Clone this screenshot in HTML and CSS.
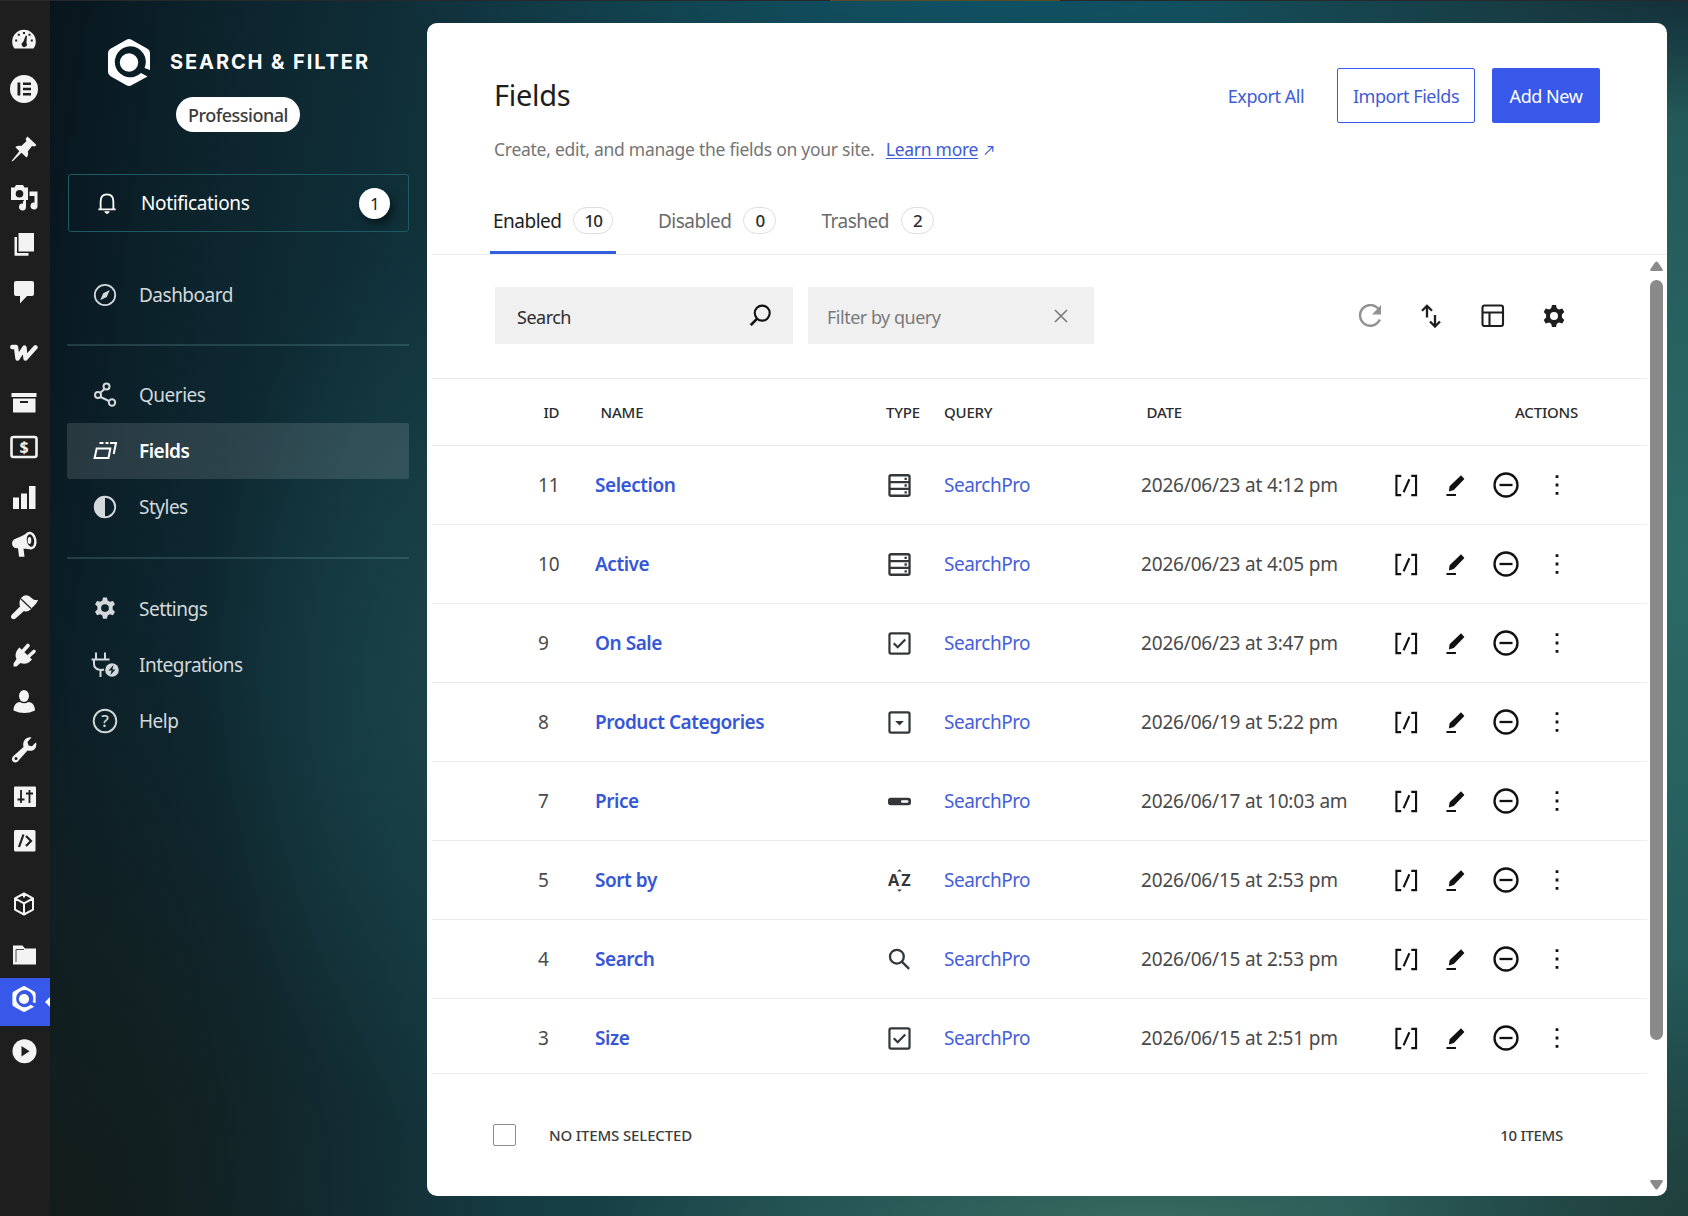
FILE: index.html
```html
<!DOCTYPE html>
<html lang="en">

<head>
    <meta charset="UTF-8">
    <meta name="viewport" content="width=device-width, initial-scale=1.0">
    <title>Fields - Search &amp; Filter</title>
    <link rel="stylesheet" href="styles.css">
</head>

<body>
    <svg class="sprite" width="0" height="0">
        <symbol id="logo" viewBox="0 0 42 47">
            <path fill="currentColor" fill-rule="evenodd" d="M18.5 .8q2.5-1.4 5 0L39.500 9.800Q42 11.200 42 14V31L36.500 29A15.500 15.500 0 1 0 33 34L39.500 37.500L23.500 46.300q-2.500 1.400-5 0L2.500 37.200Q0 35.800 0 33V14q0-2.800 2.500-4.200z" />
            <circle cx="21" cy="23.500" r="9.200" fill="currentColor" />
        </symbol>
        <symbol id="gear" viewBox="0 0 24 24">
            <path fill="currentColor" fill-rule="evenodd" d="M10 1h4l.8 3.300 2.200 1.300 3.300-1 2 3.500-2.400 2.400v3l2.400 2.400-2 3.500-3.300-1-2.200 1.300L14 23h-4l-.8-3.300L7 18.400l-3.300 1-2-3.500 2.400-2.400v-3L1.700 8.100l2-3.500 3.300 1 2.200-1.300zM12 8a4 4 0 1 0 0 8 4 4 0 0 0 0-8z" />
        </symbol>
        <symbol id="type-choice" viewBox="0 0 22 22">
            <g fill="none" stroke="currentColor" stroke-width="2.200">
                <rect x="1.400" y="1.200" width="19.200" height="19.600" rx="1.500" />
                <path d="M1.400 7.700h19.200M1.400 14.300h19.200" />
            </g>
            <path fill="currentColor" d="M15.800 3.500h2.200v2.200h-2.200zM15.800 9.900h2.200v2.200h-2.200zM15.800 16.500h2.200v2.200h-2.200z" />
        </symbol>
        <symbol id="type-check" viewBox="0 0 22 22">
            <g fill="none" stroke="currentColor" stroke-width="2.100">
                <rect x="1.400" y="1.400" width="19.200" height="19.200" rx="1.500" />
                <path d="M5.500 10.800l3.800 3.800 7.200-7.400" />
            </g>
        </symbol>
        <symbol id="type-select" viewBox="0 0 22 22">
            <rect x="1.400" y="1.400" width="19.200" height="19.200" rx="1.500" fill="none" stroke="currentColor" stroke-width="2.100" />
            <path fill="currentColor" d="M6.800 9.500h8.400L11 13.800z" />
        </symbol>
        <symbol id="type-range" viewBox="0 0 22 22">
            <rect x="0" y="7.500" width="22" height="7" rx="2.500" fill="currentColor" />
            <rect x="12.500" y="9.700" width="7" height="2.600" rx="1" fill="#fff" />
        </symbol>
        <symbol id="type-sort" viewBox="0 0 24 24">
            <path fill="currentColor" d="M9.500 2.600L12 .3l2.500 2.300zM9.500 21.400l2.500 2.300 2.500-2.300z" />
            <text x="0" y="18" class="glyph-az">A</text>
            <text x="13.800" y="18" class="glyph-az">Z</text>
        </symbol>
        <symbol id="type-search" viewBox="0 0 22 22">
            <g fill="none" stroke="currentColor" stroke-width="2.200">
                <circle cx="8.500" cy="8.300" r="6.600" />
                <path d="M13.200 13l7 7" />
            </g>
        </symbol>
        <symbol id="shortcode" viewBox="0 0 24 24">
            <path fill="none" stroke="currentColor" stroke-width="2.200" d="M7 2H2v20h5M17.500 2h5v20h-5M15.500 5.500l-6 13.500" />
        </symbol>
        <symbol id="pencil" viewBox="0 0 20 24">
            <path fill="currentColor" d="M15.800 1.200l3.600 4-11.200 11.600-5.200 1.400.8-5.500zM.500 21h10v2h-10z" />
        </symbol>
        <symbol id="minus" viewBox="0 0 26 26">
            <g fill="none" stroke="currentColor" stroke-width="2.300">
                <circle cx="13" cy="13" r="11.500" />
                <path d="M6.500 13h13" />
            </g>
        </symbol>
        <symbol id="dots" viewBox="0 0 4 22">
            <path fill="currentColor" d="M.600 1.200h2.800v2.800H.600zM.600 9.600h2.800v2.800H.600zM.600 18h2.800v2.800H.600z" />
        </symbol>
    </svg>

    <div class="top-edge"></div>

    <nav class="rail">
        <a class="rail-item"><svg viewBox="0 0 28 28"><path fill="currentColor" d="M4.500 23.500C2.500 21 2.200 18.800 2.200 16.500a11.800 11.800 0 0 1 23.600 0c0 2.300-.5 4.700-2.300 7z" /><path fill="#1e1e1e" d="M15.800 10.500l1.200.4-.6 7a2.600 2.600 0 1 1-3.200-.9zM13 7h2v2h-2zM7.800 8.800h2v2h-2zM5.200 14.500h2v2h-2zM18.500 8.800h2v2h-2zM20.800 14.500h2v2h-2z" /></svg></a>
        <a class="rail-item"><svg viewBox="0 0 28 28"><circle cx="14" cy="14" r="14" fill="currentColor" /><path fill="#1e1e1e" d="M7.500 7.500h2.800v13H7.500zM13 7.500h8v2.600h-8zM13 12.700h8v2.600h-8zM13 17.900h8v2.600h-8z" /></svg></a>
        <a class="rail-item"><svg viewBox="0 0 28 28"><path fill="currentColor" d="M17.500 1.500l9 8.500-2 1.600-2.500-.6-4.200 5.500c.8 2.500.2 4.500-1.300 6l-5-4.800L3 26l-1.500.6L2.300 25l7-8.800-4-4.200c2-1.500 4-1.600 6-1l5-4.800-.6-2.500z" /></svg></a>
        <a class="rail-item"><svg viewBox="0 0 28 28"><path fill="currentColor" fill-rule="evenodd" d="M1 3.500h3.500L6 1h7l1.500 2.500H18V16H1zM9.500 6a3.800 3.800 0 1 0 0 7.600 3.800 3.800 0 0 0 0-7.600z" /><path fill="currentColor" d="M19.500 7.500h8V22a3.500 3.500 0 1 1-3-3.500V12h-5zM16 14v9a3.500 3.500 0 1 1-3-3.500V17.500z" /></svg></a>
        <a class="rail-item"><svg viewBox="0 0 28 28"><path fill="currentColor" d="M8.500 3h15.500v18.500H8.500zM4.500 7H7v16h11.500v2.800H4.500z" /></svg></a>
        <a class="rail-item"><svg viewBox="0 0 28 28"><path fill="currentColor" d="M6 3h16q2 0 2 2v11q0 2-2 2h-5l-7 7.500V18H6q-2 0-2-2V5q0-2 2-2z" /></svg></a>
        <a class="rail-item"><svg viewBox="0 0 28 28"><path fill="none" stroke="currentColor" stroke-width="4.400" stroke-linecap="round" stroke-linejoin="round" d="M2.300 8H6l1.500 11.500L14.500 8.500l1 11L25.500 8.300" /></svg></a>
        <a class="rail-item"><svg viewBox="0 0 28 28"><path fill="currentColor" fill-rule="evenodd" d="M1.500 4h25v4h-25zM3 9.500h22.500V23.500H3zM10 12v2h8v-2z" /></svg></a>
        <a class="rail-item"><svg viewBox="0 0 28 28"><rect x="1.500" y="4" width="25" height="20" rx="2" fill="none" stroke="currentColor" stroke-width="2.600" /><text x="14" y="20" class="glyph-dollar">$</text></svg></a>
        <a class="rail-item"><svg viewBox="0 0 28 28"><path fill="currentColor" d="M3 13.500h6V25H3zM11 9.500h6V25h-6zM19 2h6.500v23H19z" /></svg></a>
        <a class="rail-item"><svg viewBox="0 0 28 28"><path fill="currentColor" d="M17 3C12 6.500 7 8 4 9.500c-3 2-2.500 7 1 8.500l3 .2 1 8.600h5.500l-1-8c3 0 5 .3 8 .7z" /><ellipse cx="20.500" cy="10.500" rx="4.800" ry="7.600" transform="rotate(-10 20.500 10.500)" fill="#1e1e1e" stroke="currentColor" stroke-width="2.400" /><ellipse cx="19.500" cy="10.500" rx="1.800" ry="3.400" fill="currentColor" /></svg></a>
        <a class="rail-item"><svg viewBox="0 0 28 28"><path fill="currentColor" d="M11.500 4.500q3.500-3.500 7.500-1.500l4.500 3.500q2.500 1 4.500.3c-1 4-4.500 6.200-7.500 9.700q-3 3-6.500 1.500L5.500 25.500q-2 1.500-3.700 0t0-3.700l8.200-8.300q-1.500-5 1.500-9z" /><path stroke="#1e1e1e" stroke-width="1.200" d="M11 6l10 9.500" /></svg></a>
        <a class="rail-item"><svg viewBox="0 0 28 28"><path fill="currentColor" d="M9.500 6.500L22 18.500c-3 4-7.500 5.200-11.500 3.500L6.500 25.500h-3v-3l3-4.500C4.500 14.500 6 9.500 9.500 6.500z" /><path stroke="currentColor" stroke-width="3.600" stroke-linecap="round" d="M13.500 9.500l4.500-5M19 15l5-4.500" /></svg></a>
        <a class="rail-item"><svg viewBox="0 0 28 28"><ellipse cx="14" cy="8" rx="5" ry="6" fill="currentColor" /><path fill="currentColor" d="M3.500 22.500c0-5 2.500-8 6.500-8.500q4 2.500 8.500 0c4 .5 6.500 3.500 6.500 8.500q-10.500 5-21.500 0z" /></svg></a>
        <a class="rail-item"><svg viewBox="0 0 28 28"><path fill="currentColor" fill-rule="evenodd" d="M21.500 1.500l-4 4.500 1 3.500 3.500.8 4-4c1 4-.5 7-3.500 8.200-2 .7-4 .2-5 0L9 24c-2 3-4.500 3-6 1.500s-1.500-4 1-6l9.500-8.500c-1.500-6 3-10.500 8-9.500zM6 21a1.500 1.500 0 1 0 0 3 1.500 1.500 0 0 0 0-3z" /></svg></a>
        <a class="rail-item"><svg viewBox="0 0 28 28"><rect x="4" y="3.500" width="22" height="20.500" rx="1" fill="currentColor" /><path stroke="#1e1e1e" stroke-width="1.800" d="M11 7v13M19.500 7v13M7.500 16.500h7M16 10.500h7" /></svg></a>
        <a class="rail-item"><svg viewBox="0 0 28 28"><rect x="4" y="3" width="21.500" height="21.500" rx="1.500" fill="currentColor" /><path fill="none" stroke="#1e1e1e" stroke-width="2.200" d="M13.500 7.500L9 20M16 9l5 5-5 5" /></svg></a>
        <a class="rail-item"><svg viewBox="0 0 28 28"><path fill="none" stroke="currentColor" stroke-width="2" stroke-linejoin="round" d="M14 3.500l9 4.800v11.400l-9 4.800-9-4.800V8.300zM5 8.300l9 5 9-5M14 13.300v11.200M14 3.500v4" /></svg></a>
        <a class="rail-item"><svg viewBox="0 0 28 28"><path fill="currentColor" d="M3 4.500h9.500l2.500 3h11v16H3z" /><path fill="none" stroke="#1e1e1e" stroke-width=".8" d="M6 21V8.500h8" /></svg></a>
        <a class="rail-item active"><svg class="rail-logo"><use href="#logo" /></svg></a>
        <a class="rail-item"><svg viewBox="0 0 28 28"><circle cx="14.500" cy="14.300" r="12" fill="currentColor" /><path fill="#1e1e1e" d="M11.500 9l8 5.300-8 5.300z" /></svg></a>
    </nav>

    <aside class="sidebar">
        <div class="brand">
            <svg class="brand-logo"><use href="#logo" /></svg>
            <span class="brand-name">SEARCH &amp; FILTER</span>
        </div>
        <div class="plan">Professional</div>

        <a class="notifications">
            <svg class="bell" viewBox="0 0 22 24"><path fill="none" stroke="currentColor" stroke-width="2" d="M1.500 18.500h19M4 18.500V10q0-8 7-8t7 8v8.500" /><path fill="currentColor" d="M8 20.500h6q-.8 3-3 3t-3-3z" /></svg>
            <span class="notifications-label">Notifications</span>
            <span class="notifications-count">1</span>
        </a>

        <a class="menu-item">
            <svg viewBox="0 0 28 28"><circle cx="14" cy="14" r="10.200" fill="none" stroke="currentColor" stroke-width="1.800" /><path fill="currentColor" d="M18.800 9l-3 7-6.600 3.200 3-7z" /></svg>
            Dashboard
        </a>
        <hr class="menu-divider">
        <a class="menu-item">
            <svg viewBox="0 0 28 28"><g fill="none" stroke="currentColor" stroke-width="2"><circle cx="15.500" cy="5.500" r="3" /><circle cx="7" cy="14" r="3" /><circle cx="21" cy="21.500" r="3.200" /><path d="M13.500 8l-4.500 4M9.500 16l8.500 4" /></g></svg>
            Queries
        </a>
        <a class="menu-item active">
            <svg viewBox="0 0 28 28"><g fill="none" stroke="currentColor" stroke-width="2"><path d="M5.700 11.500h13.600l-1.800 9.500H3.600z" /><path d="M8.500 6h4M14.500 6h3M19 6h6l-2.300 11" /></g></svg>
            Fields
        </a>
        <a class="menu-item">
            <svg viewBox="0 0 28 28"><circle cx="14" cy="14" r="10.200" fill="none" stroke="currentColor" stroke-width="1.900" /><path fill="currentColor" d="M14 3a11 11 0 0 0 0 22z" /></svg>
            Styles
        </a>
        <hr class="menu-divider last">
        <a class="menu-item">
            <svg viewBox="-1.500 -1.500 29 29"><use href="#gear" width="24" height="24" x="1" y="0" /></svg>
            Settings
        </a>
        <a class="menu-item">
            <svg viewBox="0 0 28 28"><path fill="none" stroke="currentColor" stroke-width="2" d="M5 1.500V8M14 1.500V8M.500 8.500h18M3 9v4q0 5 6.500 6 2 0 3.500-.5M9.500 19v7" /><circle cx="21" cy="19" r="6.800" fill="currentColor" /><path fill="#12292f" d="M22.500 14l-5 5.500h3l-1 4.500 5-5.500h-3z" /></svg>
            Integrations
        </a>
        <a class="menu-item">
            <svg viewBox="0 0 28 28"><circle cx="14" cy="14" r="11.300" fill="none" stroke="currentColor" stroke-width="1.900" /><text x="14" y="20" class="glyph-help">?</text></svg>
            Help
        </a>
    </aside>

    <main class="panel">
        <header class="panel-header">
            <div class="title-row">
                <h1>Fields</h1>
                <div class="header-actions">
                    <button class="btn btn-link">Export All</button>
                    <button class="btn btn-outline">Import Fields</button>
                    <button class="btn btn-primary">Add New</button>
                </div>
            </div>
            <p class="subtitle">Create, edit, and manage the fields on your site.
                <a class="learn-more">Learn more</a>
                <svg class="external" viewBox="0 0 11 11"><path fill="none" stroke="currentColor" stroke-width="1.300" d="M1 10l8.500-8.500M4 1.300h5.700V7" /></svg>
            </p>
            <div class="tabs">
                <a class="tab active">Enabled <span class="count">10</span></a>
                <a class="tab">Disabled <span class="count">0</span></a>
                <a class="tab">Trashed <span class="count">2</span></a>
            </div>
        </header>

        <div class="panel-body">
            <section class="listing">
                <div class="toolbar">
                    <div class="search-box">
                        <span>Search</span>
                        <svg viewBox="0 0 24 24"><g fill="none" stroke="currentColor" stroke-width="2.200"><circle cx="13.800" cy="9.500" r="7.800" /><path stroke-width="2.800" d="M8.300 15.500L1.800 22" /></g></svg>
                    </div>
                    <div class="filter-box">
                        <span>Filter by query</span>
                        <svg viewBox="0 0 14 14"><path stroke="currentColor" stroke-width="1.600" d="M1 1l12 12M13 1L1 13" /></svg>
                    </div>
                    <div class="tools">
                        <svg class="muted" viewBox="0 0 24 24"><path fill="none" stroke="currentColor" stroke-width="2.400" d="M20.800 5.500A10.300 10.300 0 1 0 21.800 15.500" /><path fill="currentColor" d="M23 1v9.500h-9z" /></svg>
                        <svg viewBox="0 0 24 24"><g fill="none" stroke="currentColor" stroke-width="2.300"><path d="M8 13.500V1.800M3 6.800l5-5L13 6.800M16 11v11.500M11 17.500l5 5 5-5" /></g></svg>
                        <svg viewBox="0 0 24 24"><g fill="none" stroke="currentColor" stroke-width="2.100"><rect x="1.500" y="1.500" width="20.500" height="20.500" rx="2" /><path d="M1.500 8.500H22M8.500 8.500V22" /></g></svg>
                        <svg viewBox="0 0 24 24"><use href="#gear" /></svg>
                    </div>
                </div>

                <div class="row table-head">
                    <span>ID</span>
                    <span>NAME</span>
                    <span>TYPE</span>
                    <span>QUERY</span>
                    <span>DATE</span>
                    <span>ACTIONS</span>
                </div>
                <div class="table-body" id="table-body"></div>

                <footer class="listing-footer">
                    <span class="checkbox"></span>
                    <span>NO ITEMS SELECTED</span>
                    <span class="total">10 ITEMS</span>
                </footer>
            </section>

            <div class="scrollbar">
                <svg viewBox="0 0 13 10"><path fill="currentColor" d="M5 1.500q1.500-2 3 0l4.500 6.500q1 2-1 2h-10q-2 0-1-2z" /></svg>
                <div class="thumb"></div>
                <svg class="down" viewBox="0 0 13 10"><path fill="currentColor" d="M5 8.500q1.500 2 3 0L12.500 2q1-2-1-2h-10q-2 0-1 2z" /></svg>
            </div>
        </div>
    </main>

    <script>
        const fields = [
            { id: 11, name: 'Selection', type: 'choice', query: 'SearchPro', date: '2026/06/23 at 4:12 pm' },
            { id: 10, name: 'Active', type: 'choice', query: 'SearchPro', date: '2026/06/23 at 4:05 pm' },
            { id: 9, name: 'On Sale', type: 'check', query: 'SearchPro', date: '2026/06/23 at 3:47 pm' },
            { id: 8, name: 'Product Categories', type: 'select', query: 'SearchPro', date: '2026/06/19 at 5:22 pm' },
            { id: 7, name: 'Price', type: 'range', query: 'SearchPro', date: '2026/06/17 at 10:03 am' },
            { id: 5, name: 'Sort by', type: 'sort', query: 'SearchPro', date: '2026/06/15 at 2:53 pm' },
            { id: 4, name: 'Search', type: 'search', query: 'SearchPro', date: '2026/06/15 at 2:53 pm' },
            { id: 3, name: 'Size', type: 'check', query: 'SearchPro', date: '2026/06/15 at 2:51 pm' }
        ];

        function renderFields() {
            document.getElementById('table-body').innerHTML = fields.map(field => `
                <div class="row">
                    <span class="cell-id">${field.id}</span>
                    <a class="cell-name">${field.name}</a>
                    <svg class="cell-type"><use href="#type-${field.type}" /></svg>
                    <a class="cell-query">${field.query}</a>
                    <span class="cell-date">${field.date}</span>
                    <span class="cell-actions">
                        <svg class="act-shortcode"><use href="#shortcode" /></svg>
                        <svg class="act-edit"><use href="#pencil" /></svg>
                        <svg class="act-disable"><use href="#minus" /></svg>
                        <svg class="act-more"><use href="#dots" /></svg>
                    </span>
                </div>
            `).join('');
        }

        renderFields();
    </script>
</body>

</html>
```

FILE: styles.css
```css
* {
    box-sizing: border-box;
}

body {
    margin: 0;
    height: 1216px;
    display: flex;
    overflow: hidden;
    font-family: "Segoe UI", "Noto Sans", sans-serif;
    font-size: 19px;
    letter-spacing: -0.5px;
    color: #1e1e1e;
    background:
        radial-gradient(ellipse 330px 260px at 1688px 1216px, #203f3c 0%, rgba(32, 63, 60, 0) 100%),
        radial-gradient(ellipse 500px 120px at 1688px 0, #14303a 0%, rgba(20, 48, 58, 0) 100%),
        radial-gradient(ellipse 600px 80px at 1000px 0, #0e5064 0%, rgba(14, 80, 100, 0) 100%),
        radial-gradient(ellipse 560px 700px at 1688px 560px, #2b6a66 0%, rgba(43, 106, 102, 0) 100%),
        radial-gradient(ellipse 560px 100px at 1150px 1216px, #37695f 0%, rgba(55, 105, 95, 0) 100%),
        radial-gradient(ellipse 260px 460px at 460px 680px, #1b444a 0%, rgba(27, 68, 74, 0) 100%),
        radial-gradient(ellipse 450px 600px at 50px 1216px, #131c1a 0%, rgba(19, 28, 26, 0) 100%),
        linear-gradient(98deg, #08151c 50px, #0c222b 200px, #10303a 430px, #1b4a4e 1000px, #1f5052 100%);
}

.sprite {
    display: none;
}

/* window frame showing above the page */
.top-edge {
    position: absolute;
    top: 0;
    left: 0;
    width: 100%;
    height: 1px;
    background: linear-gradient(90deg, #26282a 830px, #5c4a24 830px, #5c4a24 1060px, #26282a 1060px);
}

/* admin rail */
.rail {
    width: 50px;
    flex: none;
    display: grid;
    grid-template-rows: 53px 50px 60px 49px 46px 48px 61px 50px 44px 51px 46px 63px 48px 47px 48px 47px 44px 63px 51px 57px 39px;
    align-content: start;
    align-items: end;
    background: #1e1e1e;
    color: #f3f3f3;
}

.rail-item {
    display: flex;
    padding-left: 10px;
}

.rail-item svg {
    width: 28px;
    height: 28px;
}

.rail-item.active {
    position: relative;
    height: 48px;
    padding-left: 12px;
    padding-top: 8px;
    background: #3858e9;
    color: #fff;
}

.rail-item.active::after {
    content: "";
    position: absolute;
    right: 0;
    top: 19px;
    border: 5px solid transparent;
    border-right-color: #fff;
    border-left: 0;
}

.rail-item .rail-logo {
    width: 24px;
    height: 26px;
}

.glyph-dollar {
    font: bold 16px "Noto Sans", sans-serif;
    letter-spacing: 0;
    text-anchor: middle;
    fill: currentColor;
}

.glyph-help {
    font: 500 17px "Noto Sans", sans-serif;
    letter-spacing: 0;
    text-anchor: middle;
    fill: currentColor;
}

.glyph-az {
    font: bold 17px "Noto Sans", sans-serif;
    letter-spacing: 0;
    fill: currentColor;
}

/* plugin sidebar */
.sidebar {
    width: 376px;
    flex: none;
    padding: 38px 17px 0;
}

.brand {
    height: 48px;
    padding-left: 41px;
    display: flex;
    align-items: center;
    gap: 20px;
    color: #fff;
}

.brand-logo {
    width: 42px;
    height: 47px;
}

.brand-name {
    font-family: Inter, sans-serif;
    font-weight: 700;
    font-size: 20px;
    letter-spacing: 1.9px;
}

.plan {
    width: 124px;
    height: 35px;
    margin: 11px auto 0;
    border-radius: 18px;
    background: #fff;
    color: #3c3c3c;
    font-size: 18px;
    font-weight: 500;
    line-height: 36px;
    text-align: center;
}

.notifications {
    height: 58px;
    margin: 42px 0 35px 1px;
    padding: 0 18px 0 28px;
    display: flex;
    align-items: center;
    border: 1px solid #1f5a62;
    border-radius: 3px;
    color: #fff;
}

.bell {
    width: 20px;
    height: 23px;
    margin-right: 24px;
}

.notifications-label {
    flex: 1;
    letter-spacing: -0.35px;
}

.notifications-count {
    width: 31px;
    height: 31px;
    border-radius: 50%;
    background: #fff;
    color: #1e1e1e;
    font-size: 17px;
    line-height: 31px;
    text-align: center;
    box-shadow: 3px 5px 8px rgba(0, 0, 0, 0.5);
}

.menu-item {
    height: 56px;
    padding-left: 24px;
    display: flex;
    align-items: center;
    gap: 20px;
    color: #d3d9db;
}

.menu-item svg {
    width: 28px;
    height: 28px;
}

.menu-item.active {
    background: rgba(255, 255, 255, 0.125);
    border-radius: 2px;
    color: #fff;
    font-weight: 600;
}

.menu-divider {
    height: 2px;
    margin: 21px 0 21px;
    border: 0;
    background: rgba(110, 160, 165, 0.25);
}

.menu-divider.last {
    margin: 22px 0;
}

/* main panel */
.panel {
    width: 1240px;
    height: 1173px;
    margin: 23px 0 0 1px;
    display: flex;
    flex-direction: column;
    border-radius: 10px;
    background: #fff;
    overflow: hidden;
}

.panel-header {
    height: 232px;
    margin-left: 5px;
    padding: 45px 67px 0 62px;
    border-bottom: 1px solid #ededed;
}

.title-row {
    display: flex;
    justify-content: space-between;
    align-items: center;
    height: 55px;
}

h1 {
    margin: 0 0 2px;
    font-size: 29px;
    font-weight: 400;
    letter-spacing: -0.3px;
}

.header-actions {
    display: flex;
    gap: 17px;
}

.btn {
    height: 55px;
    padding: 0;
    border: 1px solid transparent;
    border-radius: 2px;
    background: none;
    color: #3f5bd8;
    font: inherit;
    font-size: 18px;
    letter-spacing: -0.45px;
}

.btn-link {
    width: 108px;
}

.btn-outline {
    width: 138px;
    border-color: #3858e9;
}

.btn-primary {
    width: 108px;
    background: #3858e9;
    color: #fff;
}

.subtitle {
    margin: 13px 0 0;
    font-size: 17.5px;
    line-height: 26px;
    letter-spacing: -0.27px;
    color: #757575;
}

.learn-more {
    margin-left: 7px;
    color: #3f5bd8;
    text-decoration: underline;
    text-underline-offset: 2px;
}

.external {
    width: 10px;
    height: 11px;
    margin-left: 2px;
    color: #3f5bd8;
}

.tabs {
    display: flex;
    gap: 39px;
    margin: 28px 0 0 -4px;
}

.tab {
    height: 64px;
    padding: 0 3px 3px;
    display: flex;
    align-items: center;
    gap: 12px;
    color: #6b6b6b;
}

.tab.active {
    padding-bottom: 0;
    border-bottom: 3px solid #3060dc;
    color: #1e1e1e;
}

.count {
    min-width: 33px;
    height: 27px;
    padding: 0 10px;
    border: 1px solid #dcdcdc;
    border-radius: 14px;
    color: #2c2c2c;
    font-size: 17px;
    font-weight: 500;
    letter-spacing: -1px;
    line-height: 25px;
    text-align: center;
}

.panel-body {
    flex: 1;
    display: flex;
}

.listing {
    width: 1215px;
    margin-left: 5px;
}

.toolbar {
    height: 123px;
    padding: 32px 81px 0 63px;
    display: flex;
    gap: 15px;
}

.search-box,
.filter-box {
    height: 57px;
    display: flex;
    align-items: center;
    justify-content: space-between;
    background: #f0f0f0;
    font-size: 18px;
    color: #2c2c2c;
}

.search-box span,
.filter-box span {
    padding-top: 2px;
}

.search-box {
    width: 298px;
    padding: 0 21px 0 22px;
}

.search-box svg {
    width: 23px;
    height: 23px;
    color: #111;
}

.filter-box {
    width: 286px;
    padding: 0 26px 0 19px;
    color: #7a7a7a;
}

.filter-box svg {
    width: 14px;
    height: 14px;
}

.tools {
    height: 57px;
    margin-left: auto;
    display: flex;
    align-items: center;
    gap: 37.500px;
}

.tools svg {
    width: 24px;
    height: 24px;
}

.tools .muted {
    color: #919191;
}

.row {
    height: 79.050px;
    padding-left: 106px;
    display: grid;
    grid-template-columns: 57px 291px 58px 197px 253px auto;
    align-items: center;
    border-top: 1px solid #ececec;
}

.table-head {
    height: 67px;
    font-size: 15px;
    font-weight: 500;
    letter-spacing: -0.2px;
    color: #2c2c2c;
}

.table-head span:nth-child(1),
.table-head span:nth-child(2),
.table-head span:nth-child(5) {
    padding-left: 5.500px;
}

.table-head span:last-child {
    padding-left: 121px;
}

.table-body {
    height: 628px;
    overflow: hidden;
}

.cell-id,
.cell-date {
    color: #4a4a4a;
    letter-spacing: -0.18px;
}

.cell-name {
    color: #3656d8;
    font-weight: 600;
    letter-spacing: -0.45px;
}

.cell-query {
    color: #4560da;
}

.cell-type {
    width: 23px;
    height: 23px;
    margin-left: 2px;
    color: #33373a;
}

.cell-actions {
    display: flex;
    align-items: center;
    color: #111;
}

.act-shortcode {
    width: 24px;
    height: 23px;
}

.act-edit {
    width: 19px;
    height: 23px;
    margin-left: 28px;
}

.act-disable {
    width: 26px;
    height: 26px;
    margin-left: 28px;
}

.act-more {
    width: 4px;
    height: 22px;
    margin-left: 36px;
}

.listing-footer {
    height: 123px;
    padding: 0 84px 0 61px;
    display: flex;
    align-items: center;
    border-top: 1px solid #ececec;
    font-size: 15px;
    font-weight: 500;
    letter-spacing: -0.15px;
    color: #3c3c3c;
}

.checkbox {
    width: 23px;
    height: 22px;
    margin-right: 33px;
    border: 1px solid #8c8c8c;
    border-radius: 2px;
}

.total {
    margin-left: auto;
    letter-spacing: -0.3px;
}

.scrollbar {
    width: 13px;
    margin-left: 3px;
    padding: 6px 0 6px;
    display: flex;
    flex-direction: column;
    color: #8a8a8a;
}

.scrollbar svg {
    width: 13px;
    height: 10px;
}

.scrollbar .down {
    margin-top: auto;
}

.thumb {
    height: 760px;
    margin-top: 9px;
    border-radius: 7px;
    background: #8a8a8a;
}
```
